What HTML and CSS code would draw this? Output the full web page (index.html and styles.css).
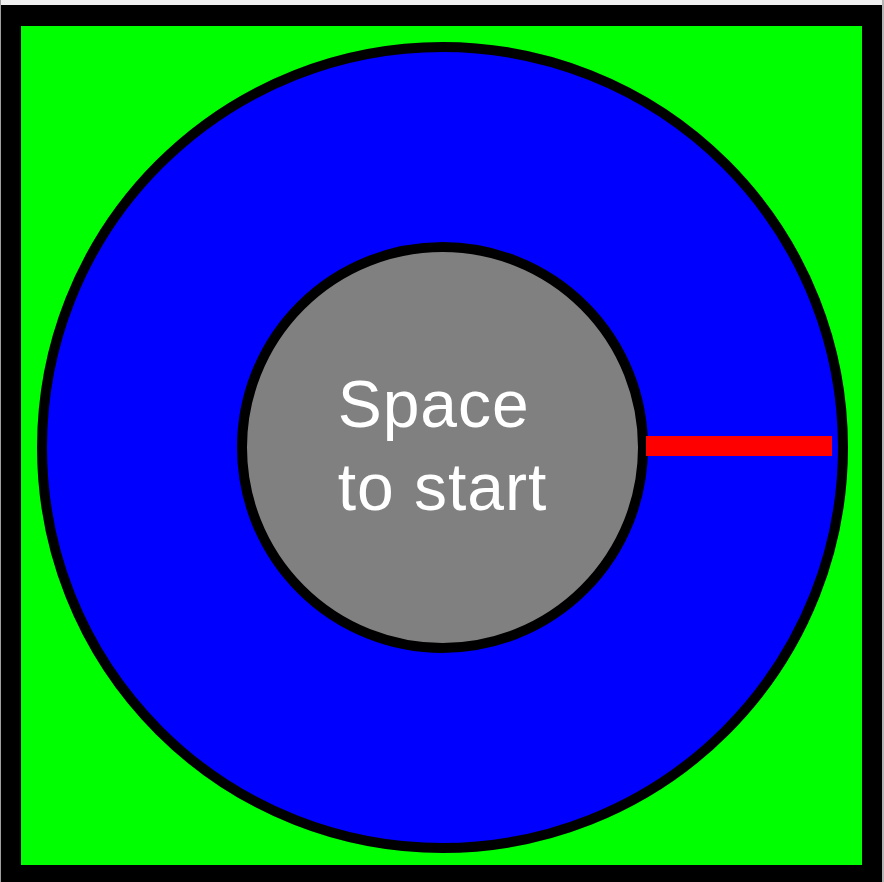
FILE: index.html
```html
<!DOCTYPE html>
<html lang="en">
<head>
    <meta charset="UTF-8">
    <meta name="viewport" content="width=device-width, initial-scale=1.0">
    <title>Spinner</title>
    <link rel="stylesheet" href="styles.css">
</head>
<body>
    <div class="window">
        <div class="canvas">
            <div class="field">
                <div class="ring">
                    <div class="hub">
                        <div class="label">Space<br>to start</div>
                    </div>
                    <!-- the hand, pointing right at start -->
                    <div class="hand"></div>
                </div>
            </div>
        </div>
    </div>
</body>
</html>
```

FILE: styles.css
```css
html, body {
    margin: 0;
    height: 100%;
    overflow: hidden;
    background-color: #f0f0f0;
}
.window {
    width: 884px;
    height: 882px;
    box-sizing: border-box;
    padding-top: 5px;
    border-left: 1px solid #a0a0a0;
    border-right: 2px solid #b4b4b4;
    background-color: #f0f0f0;
}
.canvas {
    height: 877px;
    box-sizing: border-box;
    padding: 21px 20px 0 20px;
    background-color: #000;
}
.field {
    width: 841px;
    height: 839px;
    box-sizing: border-box;
    padding: 16px 0 0 16px;
    background-color: #00ff00;
}
.ring {
    position: relative;
    width: 811px;
    height: 811px;
    box-sizing: border-box;
    border: 10px solid #000;
    border-radius: 50%;
    background-color: #0000ff;
    display: flex;
    align-items: center;
    justify-content: center;
}
.hub {
    width: 411px;
    height: 411px;
    box-sizing: border-box;
    border: 10px solid #000;
    border-radius: 50%;
    background-color: #808080;
    display: flex;
    align-items: center;
    justify-content: center;
}
.label {
    font-family: "Liberation Sans", Arial, sans-serif;
    font-size: 66px;
    line-height: 83px;
    letter-spacing: 1px;
    color: #fff;
    text-align: left;
    margin-top: -4px;
}
.hand {
    position: absolute;
    left: 599px;
    top: 384px;
    width: 186px;
    height: 20px;
    background-color: #ff0000;
}
```
